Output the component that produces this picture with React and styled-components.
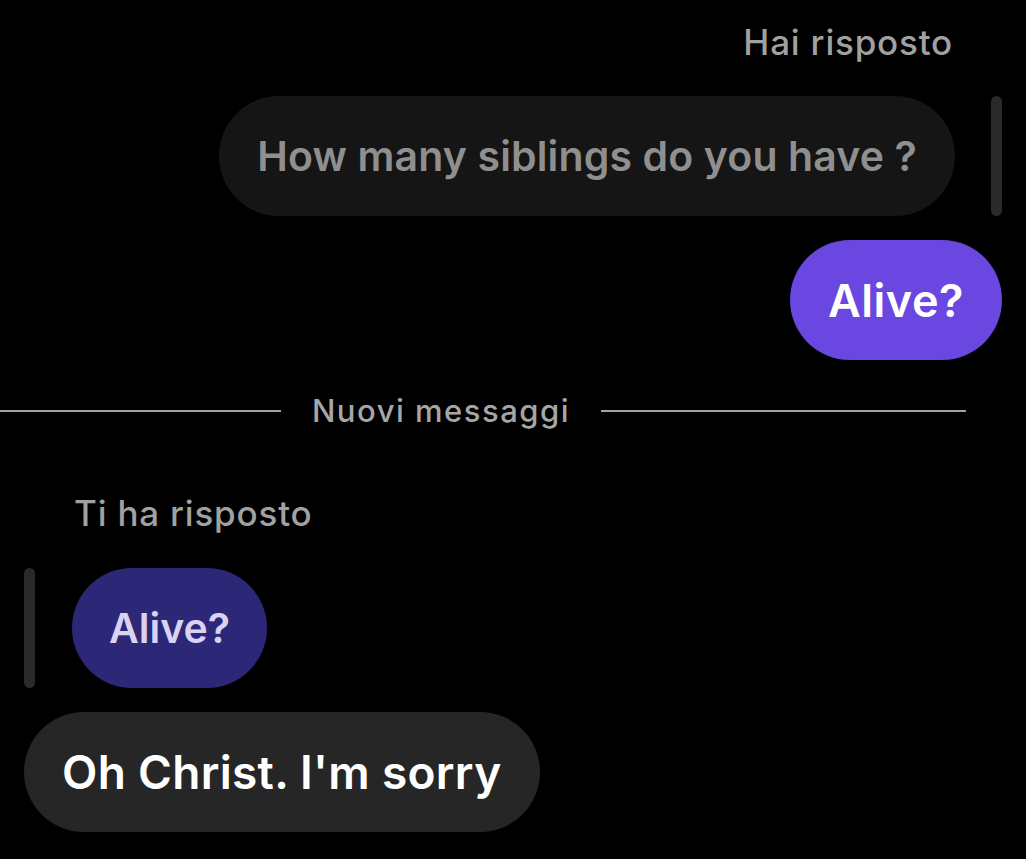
import React from "react";
import styled, { createGlobalStyle } from "styled-components";

const GlobalStyle = createGlobalStyle`
    html, body {
        margin: 0;
        padding: 0;
        background: #000;
    }
    body {
        font-family: Inter, "Noto Sans", sans-serif;
        -webkit-font-smoothing: antialiased;
    }
`;

const Chat = styled.div`
    width: 1026px;
    height: 859px;
    background: #000;
    display: flex;
    flex-direction: column;
    overflow: hidden;
`;
const Label = styled.div`
    font-size: 35px;
    font-weight: 500;
    letter-spacing: 0.8px;
    color: #a1a1a1;
    line-height: 40px;
    text-align: ${(p) => (p.$mine ? "right" : "left")};
    padding: ${(p) => (p.$mine ? "22px 73px 0 0" : "0 0 0 74px")};
    margin-top: ${(p) => (p.$mine ? "0" : "56px")};
`;
const Row = styled.div`
    display: flex;
    align-items: stretch;
    justify-content: ${(p) => (p.$mine ? "flex-end" : "flex-start")};
    gap: ${(p) => p.$gap || 0}px;
    padding: 0 24px;
    margin-top: ${(p) => p.$top || 0}px;
`;
const Bubble = styled.div`
    height: 120px;
    box-sizing: border-box;
    display: flex;
    align-items: center;
    padding: 0 ${(p) => p.$pad || 38}px;
    border-radius: 60px;
    font-size: ${(p) => p.$size || 40}px;
    font-weight: ${(p) => p.$weight || 600};
    letter-spacing: ${(p) => p.$track || 0}px;
    background: ${(p) => p.$bg};
    color: ${(p) => p.$color};
    white-space: nowrap;
`;
const ReplyBar = styled.div`
    width: 11px;
    height: 120px;
    border-radius: 6px;
    background: #2a2a2a;
`;
const Divider = styled.div`
    display: flex;
    align-items: center;
    gap: 31px;
    margin-top: 25px;
    padding-right: 60px;
    font-size: 31px;
    font-weight: 500;
    letter-spacing: 1.5px;
    color: #a6a6a6;
    line-height: 52px;

    &::before,
    &::after {
        content: "";
        flex: 1;
        height: 2px;
        background: #a3a3a3;
    }
    &::after {
        flex: 0 0 365px;
    }
`;

const App = () => {
    return (
        <Chat>
            <GlobalStyle />
            <Label $mine>Hai risposto</Label>
            <Row $mine $gap={36} $top={34}>
                <Bubble $bg="#151515" $color="#8f8f8f" $size={41} $track={0.13}>
                    How many siblings do you have ?
                </Bubble>
                <ReplyBar />
            </Row>
            <Row $mine $top={24}>
                <Bubble $bg="#6b47e2" $color="#ffffff" $size={45} $track={0.5}>
                    Alive?
                </Bubble>
            </Row>
            <Divider>Nuovi messaggi</Divider>
            <Label>Ti ha risposto</Label>
            <Row $gap={37} $top={35}>
                <ReplyBar />
                <Bubble $bg="#2d2777" $color="#d9d2f2" $size={41} $pad={37}>
                    Alive?
                </Bubble>
            </Row>
            <Row $top={24}>
                <Bubble $bg="#262626" $color="#ffffff" $size={46} $track={0.3}>
                    Oh Christ. I'm sorry
                </Bubble>
            </Row>
        </Chat>
    );
};
export default App;
